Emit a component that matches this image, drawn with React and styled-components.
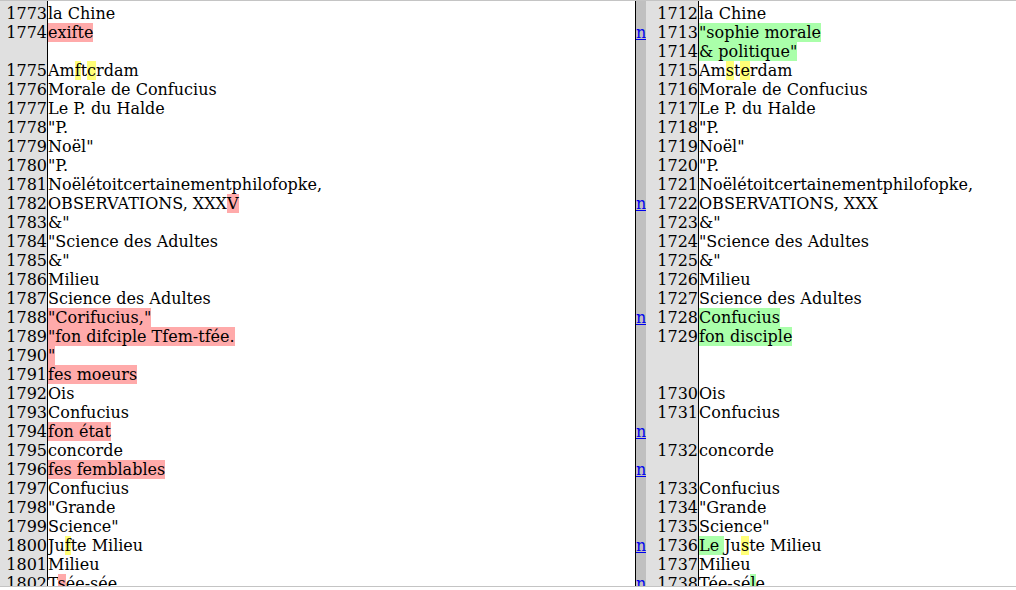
import React from 'react';
import styled, { createGlobalStyle } from 'styled-components';

const Global = createGlobalStyle`
  html, body { margin: 0; padding: 0; background: #fff; }
  body { font-family: "DejaVu Serif", serif; }
`;

const Frame = styled.div`
  width: 1016px;
  height: 585px;
  border-top: 1px solid #c4c4c4;
  border-bottom: 1px solid #c4c4c4;
  overflow: hidden;
  font: 16px/19px "DejaVu Serif", serif;
  color: #000;
`;

const Row = styled.div`
  display: grid;
  grid-template-columns: 48px 588px 10px 53px 1fr;
  height: ${(p) => p.$h ?? 19}px;
`;

const LineNo = styled.div`
  box-sizing: border-box;
  background: #e0e0e0;
  border-right: 1px solid #000;
  text-align: right;
  white-space: nowrap;
`;

const Text = styled.div`
  box-sizing: border-box;
  white-space: pre;
  overflow: hidden;
  border-right: ${(p) => (p.$divider ? '1px solid #000' : '0')};
`;

const Next = styled.div`
  background: #c0c0c0;
  white-space: nowrap;
`;

const NextLink = styled.a`
  color: #0000ee;
  text-decoration: underline;
`;

const markColors = { sub: '#ffaaaa', add: '#aaffaa', chg: '#ffff77' };

const Mark = styled.span`
  background: ${(p) => markColors[p.$kind]};
`;

const S = (t) => ['sub', t];
const A = (t) => ['add', t];
const C = (t) => ['chg', t];

const rows = [
  { l: '1773', lt: ['la Chine'], r: '1712', rt: ['la Chine'] },
  { l: '1774', lt: [S('exifte')], n: true, r: '1713', rt: [A('"sophie morale')] },
  { l: '', lt: [], r: '1714', rt: [A('& politique"')] },
  { l: '1775', lt: ['Am', C('f'), 't', C('c'), 'rdam'], r: '1715', rt: ['Am', C('s'), 't', C('e'), 'rdam'] },
  { l: '1776', lt: ['Morale de Confucius'], r: '1716', rt: ['Morale de Confucius'] },
  { l: '1777', lt: ['Le P. du Halde'], r: '1717', rt: ['Le P. du Halde'] },
  { l: '1778', lt: ['"P.'], r: '1718', rt: ['"P.'] },
  { l: '1779', lt: ['Noël"'], r: '1719', rt: ['Noël"'] },
  { l: '1780', lt: ['"P.'], r: '1720', rt: ['"P.'] },
  { l: '1781', lt: ['Noëlétoitcertainementphilofopke,'], r: '1721', rt: ['Noëlétoitcertainementphilofopke,'] },
  { l: '1782', lt: ['OBSERVATIONS, XXX', S('V')], n: true, r: '1722', rt: ['OBSERVATIONS, XXX'] },
  { l: '1783', lt: ['&"'], r: '1723', rt: ['&"'] },
  { l: '1784', lt: ['"Science des Adultes'], r: '1724', rt: ['"Science des Adultes'] },
  { l: '1785', lt: ['&"'], r: '1725', rt: ['&"'] },
  { l: '1786', lt: ['Milieu'], r: '1726', rt: ['Milieu'] },
  { l: '1787', lt: ['Science des Adultes'], r: '1727', rt: ['Science des Adultes'] },
  { l: '1788', lt: [S('"Corifucius,"')], n: true, r: '1728', rt: [A('Confucius')] },
  { l: '1789', lt: [S('"fon difciple Tfem-tfée.')], r: '1729', rt: [A('fon disciple')] },
  { l: '1790', lt: [S('"')], r: '', rt: [] },
  { l: '1791', lt: [S('fes moeurs')], r: '', rt: [] },
  { l: '1792', lt: ['Ois'], r: '1730', rt: ['Ois'] },
  { l: '1793', lt: ['Confucius'], r: '1731', rt: ['Confucius'] },
  { l: '1794', lt: [S('fon état')], n: true, r: '', rt: [] },
  { l: '1795', lt: ['concorde'], r: '1732', rt: ['concorde'] },
  { l: '1796', lt: [S('fes femblables')], n: true, r: '', rt: [] },
  { l: '1797', lt: ['Confucius'], r: '1733', rt: ['Confucius'] },
  { l: '1798', lt: ['"Grande'], r: '1734', rt: ['"Grande'] },
  { l: '1799', lt: ['Science"'], r: '1735', rt: ['Science"'] },
  { l: '1800', lt: ['Ju', C('f'), 'te Milieu'], n: true, r: '1736', rt: [A('Le '), 'Ju', C('s'), 'te Milieu'] },
  { l: '1801', lt: ['Milieu'], r: '1737', rt: ['Milieu'] },
  { l: '1802', lt: ['T', S('s'), 'ée-sée'], n: true, r: '1738', rt: ['Tée-sé', A('l'), 'e'] },
];

function Segments({ parts }) {
  return parts.map((p, i) =>
    typeof p === 'string' ? (
      <React.Fragment key={i}>{p}</React.Fragment>
    ) : (
      <Mark key={i} $kind={p[0]}>{p[1]}</Mark>
    )
  );
}

export default function App() {
  return (
    <>
      <Global />
      <Frame>
        <Row $h={3}>
          <LineNo />
          <Text $divider />
          <Next />
          <LineNo />
          <Text />
        </Row>
        {rows.map((row, i) => (
          <Row key={i}>
            <LineNo>{row.l}</LineNo>
            <Text $divider>
              <Segments parts={row.lt} />
            </Text>
            <Next>{row.n ? <NextLink href="#">n</NextLink> : null}</Next>
            <LineNo>{row.r}</LineNo>
            <Text>
              <Segments parts={row.rt} />
            </Text>
          </Row>
        ))}
      </Frame>
    </>
  );
}
